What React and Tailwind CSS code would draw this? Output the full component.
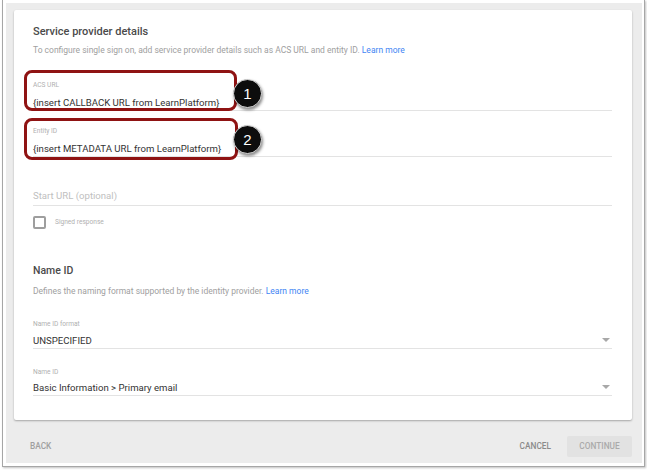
import React from "react";

const font = { fontFamily: "Roboto, 'Liberation Sans', sans-serif" };

function Arrow() {
  return (
    <svg width="8" height="4" viewBox="0 0 8 4" className="mr-[2px] mb-[2px]">
      <path d="M0 0 L8 0 L4 4 Z" fill="#a8a8a8" />
    </svg>
  );
}

function Badge({ n }) {
  return (
    <div className="absolute w-[29px] h-[29px] rounded-full bg-[#0d0d0d] border border-[#d8d8d8] shadow-[1px_2px_3px_rgba(0,0,0,0.45)] flex items-center justify-center text-white text-[15px] leading-none" style={{ fontFamily: "'Liberation Sans', Arial, sans-serif" }}>
      {n}
    </div>
  );
}

export default function App() {
  return (
    <div className="w-[647px] h-[472px] bg-white overflow-hidden" style={font}>
      <div className="ml-[2px] w-[643px] h-[467px] border-l border-r border-b border-[#a6a6a6] pt-[3px] pl-[3px] pr-[2px] pb-[3px] shadow-[1px_1px_2px_rgba(0,0,0,0.25)]">
        <div className="w-[636px] h-[460px] bg-[#ececec] flex flex-col">
          <div className="mt-[7px] ml-[8px] w-[618px] h-[410px] bg-white rounded-[2px] shadow-[0_1px_2px_rgba(0,0,0,0.3)] pt-[15px] pl-[19px] pr-[20px]">
            <div className="h-[14px] leading-[14px] text-[11px] font-medium text-[#4a4a4a]">Service provider details</div>
            <div className="mt-[4px] h-[14px] leading-[14px] text-[8.5px] text-[#a0a0a0]">
              To configure single sign on, add service provider details such as ACS URL and entity ID.{" "}
              <span className="text-[#4285f4]">Learn more</span>
            </div>

            <div className="relative mt-[23px] border-b border-[#e3e3e3]">
              <div className="h-[10px] leading-[10px] text-[6.6px] text-[#b0b0b0]">ACS URL</div>
              <div className="mt-[6px] h-[14px] leading-[14px] text-[9.6px] text-[#333]">{"{insert CALLBACK URL from LearnPlatform}"}</div>
              <div className="absolute left-[-9px] top-[-10px] w-[213px] h-[41px] border-[3px] border-[#8f1313] rounded-[8px]" />
              <div className="absolute left-[200px] top-[-1px]"><Badge n="1" /></div>
            </div>

            <div className="relative mt-[15px] border-b border-[#e3e3e3]">
              <div className="h-[10px] leading-[10px] text-[6.6px] text-[#b0b0b0]">Entity ID</div>
              <div className="mt-[6px] h-[14px] leading-[14px] text-[9.6px] text-[#333]">{"{insert METADATA URL from LearnPlatform}"}</div>
              <div className="absolute left-[-9px] top-[-8px] w-[214px] h-[42px] border-[3px] border-[#8f1313] rounded-[8px]" />
              <div className="absolute left-[200px] top-[-1px]"><Badge n="2" /></div>
            </div>

            <div className="mt-[32px] pb-[2px] border-b border-[#e3e3e3]">
              <div className="h-[14px] leading-[14px] text-[9.6px] text-[#c0c0c0]">Start URL (optional)</div>
            </div>

            <div className="mt-[10px] flex items-center gap-[9px]">
              <div className="w-[13px] h-[13px] border-2 border-[#9e9e9e] rounded-[2px]" />
              <div className="text-[6.6px] text-[#b0b0b0]">Signed response</div>
            </div>

            <div className="mt-[35px] h-[14px] leading-[14px] text-[10.5px] font-medium text-[#4a4a4a]">Name ID</div>
            <div className="mt-[6px] h-[14px] leading-[14px] text-[8.5px] text-[#a0a0a0]">
              Defines the naming format supported by the identity provider.{" "}
              <span className="text-[#4285f4]">Learn more</span>
            </div>

            <div className="mt-[21px] border-b border-[#e3e3e3]">
              <div className="h-[10px] leading-[10px] text-[6.6px] text-[#b0b0b0]">Name ID format</div>
              <div className="mt-[5px] h-[14px] flex items-center justify-between">
                <div className="leading-[14px] text-[9.6px] text-[#333]">UNSPECIFIED</div>
                <Arrow />
              </div>
            </div>

            <div className="mt-[18px] border-b border-[#e3e3e3]">
              <div className="h-[10px] leading-[10px] text-[6.6px] text-[#b0b0b0]">Name ID</div>
              <div className="mt-[4px] h-[14px] flex items-center justify-between">
                <div className="leading-[14px] text-[9.6px] text-[#333]">{"Basic Information > Primary email"}</div>
                <Arrow />
              </div>
            </div>
          </div>

          <div className="h-[43px] pt-[10px] flex items-center pl-[24px] pr-[10px]">
            <div className="text-[8.3px] font-medium text-[#a0a0a0]">BACK</div>
            <div className="ml-auto text-[8.3px] font-medium text-[#8a8a8a]">CANCEL</div>
            <div className="ml-[16px] w-[65px] h-[21px] bg-[#e2e2e2] rounded-[2px] flex items-center justify-center text-[8.3px] font-medium text-[#aaa]">CONTINUE</div>
          </div>
        </div>
      </div>
    </div>
  );
}
